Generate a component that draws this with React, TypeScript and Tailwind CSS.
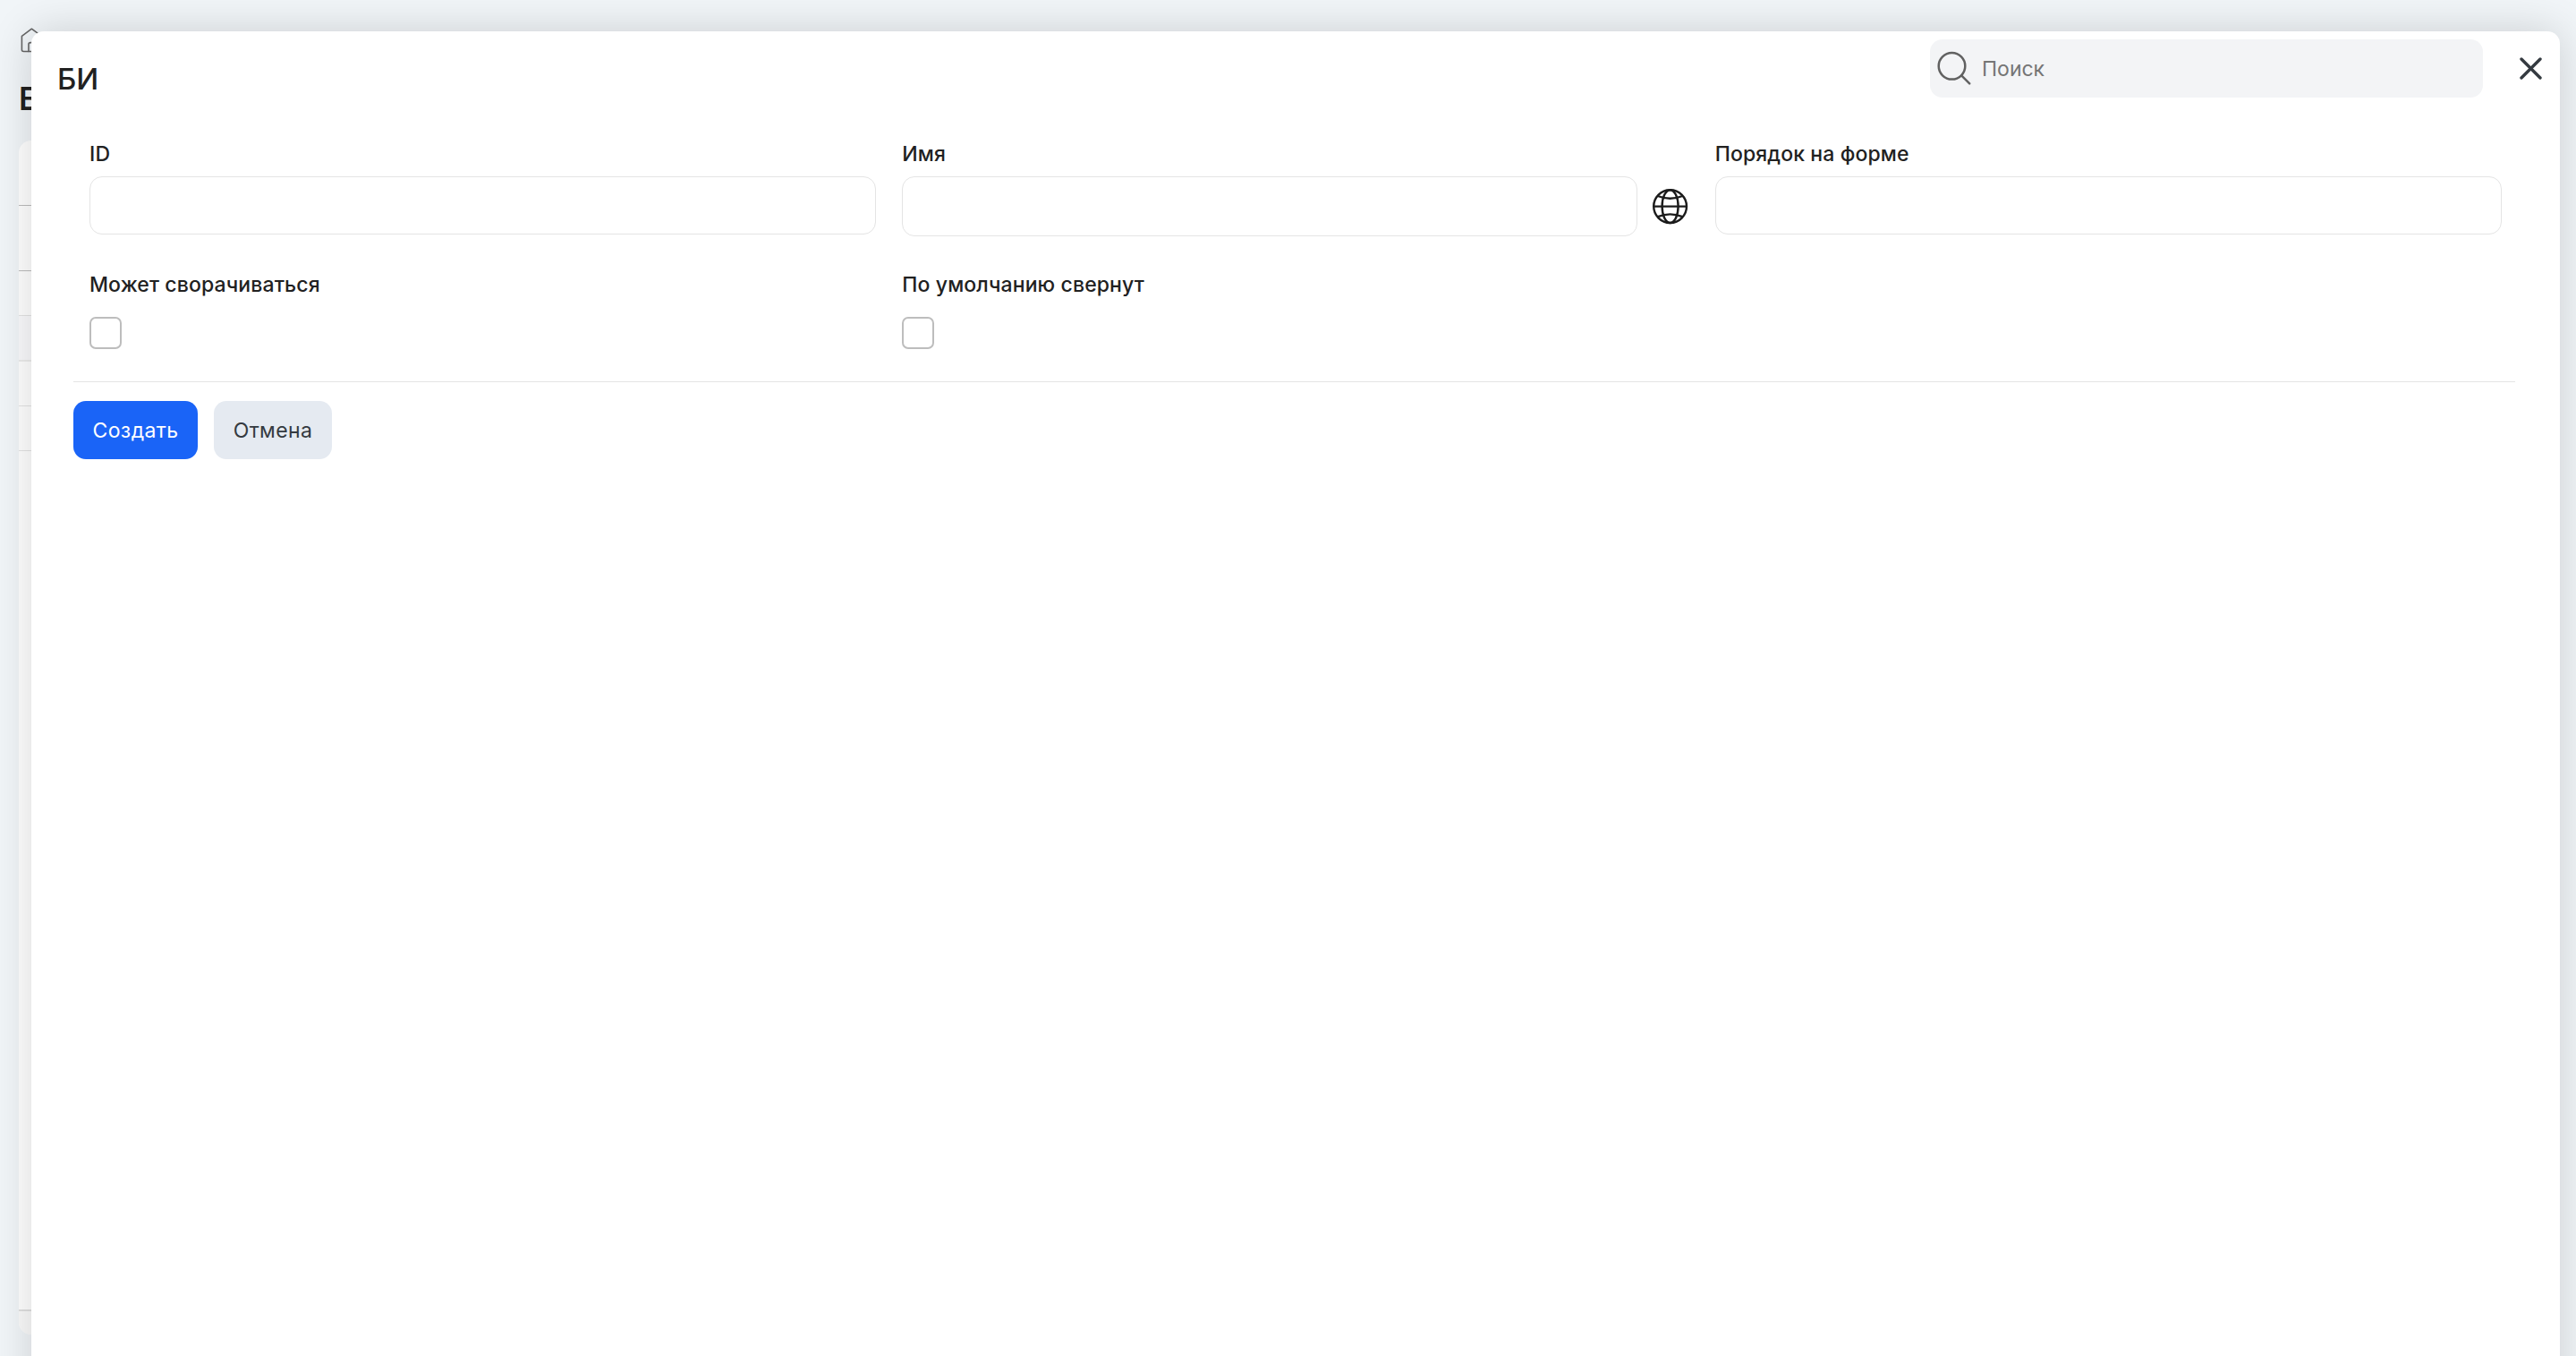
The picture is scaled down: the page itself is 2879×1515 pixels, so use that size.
import React from 'react';

interface FieldProps {
  label: string;
  children: React.ReactNode;
}

const Field: React.FC<FieldProps> = ({ label, children }) => (
  <div className="flex flex-col">
    <span className="h-[29px] text-[23px] leading-[31px] font-medium tracking-[0.12px] text-[#212121] whitespace-nowrap">
      {label}
    </span>
    {children}
  </div>
);

const inputClass = 'block mt-[11px] min-w-0 border border-[#e4e4e4] rounded-[14px] outline-none px-4 text-[24px] bg-white';

const Checkbox: React.FC = () => (
  <input type="checkbox" className="appearance-none block mt-[22px] size-9 border-2 border-[#bdbdbd] rounded-[7px] bg-white" />
);

const HomeIcon = () => (
  <svg className="block" width="26" height="30" viewBox="0 0 26 30" fill="none" stroke="#666" strokeWidth="1.6" strokeLinejoin="round" strokeLinecap="round">
    <path d="M1.4 9.4 12.4 1.2l11 8.2V24.5a2 2 0 0 1-2 2h-18a2 2 0 0 1-2-2z" />
    <path d="M9 26.5V18.6a2 2 0 0 1 2-2h3a2 2 0 0 1 2 2v7.9" />
  </svg>
);

const SearchIcon = () => (
  <svg className="block shrink-0" width="40" height="40" viewBox="0 0 40 40" fill="none" stroke="#616161" strokeWidth="2.5" strokeLinecap="round">
    <circle cx="16.5" cy="16.8" r="14.8" />
    <path d="m27.2 27.4 9 9" />
  </svg>
);

const GlobeIcon = () => (
  <svg className="block shrink-0" width="40" height="40" viewBox="0 0 40 40" fill="none" stroke="#1b1b1b" strokeWidth="2.4">
    <circle cx="19.6" cy="19.6" r="18.4" />
    <ellipse cx="19.6" cy="19.6" rx="9" ry="18.4" />
    <path d="M1.2 19.6H38M5.8 8Q19.6 13.6 33.4 8M5.8 31.2Q19.6 25.6 33.4 31.2" />
  </svg>
);

const CloseIcon = () => (
  <svg className="block" width="25" height="25" viewBox="0 0 25 25" fill="none" stroke="#343a40" strokeWidth="3.4" strokeLinecap="round">
    <path d="M2 2 23 23M23 2 2 23" />
  </svg>
);

// Page that stays visible around the dialog
const BackgroundPage = () => (
  <div className="h-full pl-[21px] pt-[31px]">
    <div className="pl-0.5">
      <HomeIcon />
    </div>
    <h1 className="mt-[28px] h-[43px] text-[35px] leading-[43px] font-semibold text-[#212121]">БИ</h1>
    <div className="mt-[25px] h-[1334px] w-[2837px] rounded-[14px] bg-white overflow-hidden flex flex-col">
      <div className="h-[73px] border-b border-[#bdbdbd]" />
      <div className="h-[73px] border-b border-[#bdbdbd]" />
      <div className="h-[50px] border-b border-[#e4e4e4]" />
      <div className="h-[51px] border-b-2 border-[#ececec] bg-[#fafafc]" />
      <div className="h-[50px] border-b border-[#e4e4e4]" />
      <div className="h-[50px] border-b border-[#e4e4e4]" />
      <div className="flex-1" />
      <div className="h-[28px] border-t-2 border-[#e0e0e0] bg-[#fafafa]" />
    </div>
  </div>
);

export default function App() {
  return (
    <div className="relative w-[2879px] h-[1515px] overflow-hidden bg-[#f1f5f8] font-['Inter','Liberation_Sans',sans-serif]">
      <BackgroundPage />

      <div className="absolute left-[35px] top-[35px] w-[2826px] h-[1600px] rounded-t-[14px] bg-white shadow-[0_0_48px_rgba(0,0,0,0.16)]">
        <div className="flex h-[122px] items-start justify-between pl-[29px] pr-[20px]">
          <h2 className="mt-[32px] text-[33px] leading-[43px] font-medium text-[#212121]">БИ</h2>
          <div className="flex items-center mt-[9px]">
            <label className="flex items-center w-[618px] h-[65px] rounded-[14px] bg-[#f3f4f6] pl-[8px] gap-[10px]">
              <SearchIcon />
              <input
                placeholder="Поиск"
                className="min-w-0 flex-1 bg-transparent outline-none pt-[2px] text-[23px] placeholder:text-[#757575]"
              />
            </label>
            <button className="ml-[41px]">
              <CloseIcon />
            </button>
          </div>
        </div>

        <div className="grid grid-cols-3 gap-x-[29px] px-[65px]">
          <Field label="ID">
            <input className={`${inputClass} h-[65px]`} />
          </Field>
          <Field label="Имя">
            <div className="flex items-center">
              <input className={`${inputClass} h-[67px] flex-1`} />
              <button className="ml-[17px] mt-[11px] w-[41px]">
                <GlobeIcon />
              </button>
            </div>
          </Field>
          <Field label="Порядок на форме">
            <input className={`${inputClass} h-[65px]`} />
          </Field>
        </div>

        <div className="grid grid-cols-3 gap-x-[29px] mt-[39px] px-[65px]">
          <Field label="Может сворачиваться">
            <Checkbox />
          </Field>
          <Field label="По умолчанию свернут">
            <Checkbox />
          </Field>
        </div>

        <div className="ml-[47px] mr-[50px] mt-[36px] border-t border-[#e4e4e4] pt-[21px] flex gap-[18px]">
          <button className="w-[139px] h-[65px] pt-[2px] rounded-[14px] bg-[#1a64f7] text-[23px] tracking-[0.4px] text-white">Создать</button>
          <button className="w-[132px] h-[65px] pt-[2px] rounded-[14px] bg-[#e5eaf1] text-[23px] tracking-[0.4px] text-[#343a40]">Отмена</button>
        </div>
      </div>
    </div>
  );
}
